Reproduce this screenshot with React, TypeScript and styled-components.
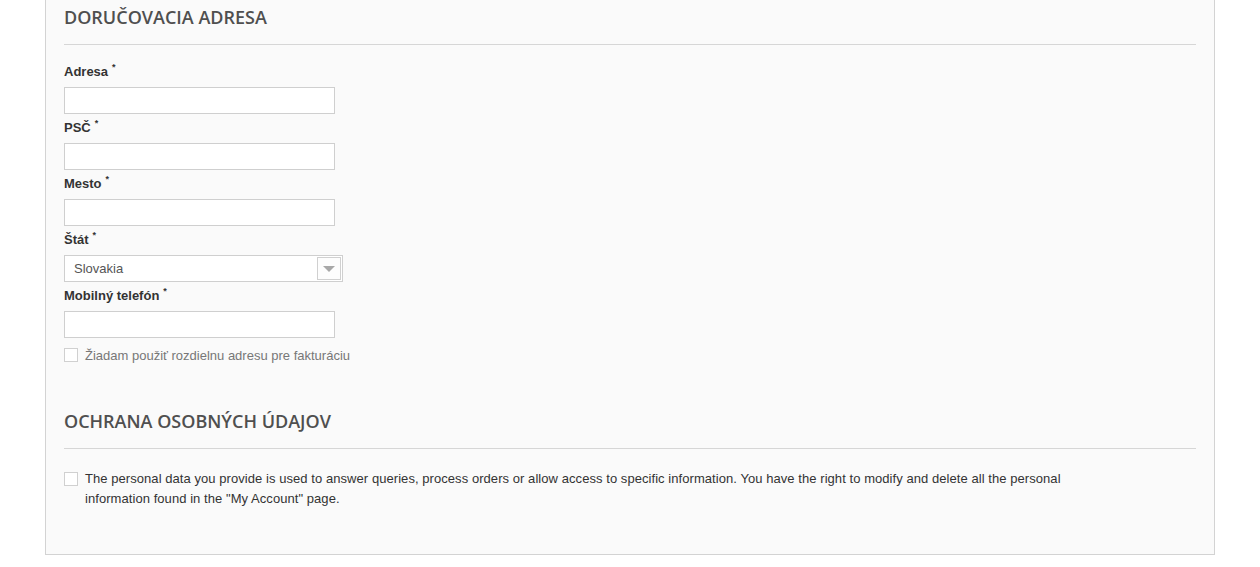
import React from "react";
import styled, { createGlobalStyle } from "styled-components";

const GlobalStyle = createGlobalStyle`
  html, body { margin: 0; padding: 0; background: #ffffff; }
  body { font-family: "Liberation Sans", Arial, Helvetica, sans-serif; }
  * { box-sizing: border-box; }
`;

const Panel = styled.div`
  margin-left: 45px;
  width: 1170px;
  background: #fafafa;
  border: 1px solid #d3d3d3;
  border-top: none;
  padding: 5px 18px 45px 18px;
`;

const Section = styled.section<{ $gapTop?: number }>`
  margin-top: ${(p) => p.$gapTop ?? 0}px;
`;

const Heading = styled.h2`
  margin: 0;
  font-family: "Open Sans", sans-serif;
  font-weight: 600;
  font-size: 18px;
  line-height: 24px;
  color: #4f4f4f;
  text-transform: uppercase;
`;

const Rule = styled.div`
  height: 1px;
  background: #d6d6d6;
  margin: 15px 0 0 0;
`;

const Fields = styled.div`
  padding-top: 18px;
  display: flex;
  flex-direction: column;
`;

const Field = styled.div`
  display: flex;
  flex-direction: column;
  align-items: flex-start;
  margin-bottom: 5px;
`;

const Label = styled.label`
  font-size: 13px;
  line-height: 17px;
  font-weight: 700;
  color: #333333;
  margin-bottom: 7px;
`;

const Req = styled.span`
  font-size: 9px;
  vertical-align: top;
  line-height: 9px;
  margin-left: 4px;
`;

const TextInput = styled.input`
  width: 271px;
  height: 27px;
  border: 1px solid #cfcfcf;
  background: #ffffff;
  padding: 0 9px;
  font-family: "Liberation Sans", Arial, sans-serif;
  font-size: 13px;
  outline: none;
  margin: 0;
`;

const SelectBox = styled.div`
  width: 279px;
  height: 27px;
  border: 1px solid #cfcfcf;
  background: #ffffff;
  display: flex;
  align-items: center;
  justify-content: space-between;
  padding: 1px 1px 1px 9px;
`;

const SelectText = styled.span`
  font-size: 13px;
  color: #555555;
`;

const ArrowBox = styled.div`
  width: 24px;
  height: 23px;
  border: 1px solid #d0d0d0;
  background: #fdfdfd;
  display: flex;
  align-items: center;
  justify-content: center;
`;

const Triangle = styled.div`
  width: 0;
  height: 0;
  border-left: 6px solid transparent;
  border-right: 6px solid transparent;
  border-top: 6px solid #a8a8a8;
  margin-top: 1px;
`;

const CheckRow = styled.label<{ $top?: number; $color?: string; $lh?: number }>`
  display: flex;
  align-items: flex-start;
  gap: 7px;
  margin-top: ${(p) => p.$top ?? 0}px;
  font-size: 13px;
  line-height: ${(p) => p.$lh ?? 16}px;
  color: ${(p) => p.$color ?? "#333"};
`;

const Box = styled.span<{ $offset?: number }>`
  flex: none;
  width: 14px;
  height: 14px;
  border: 1px solid #d0d0d0;
  background: #ffffff;
  margin-top: ${(p) => p.$offset ?? 1}px;
`;

const PrivacyText = styled.span`
  max-width: 1000px;
  letter-spacing: 0.06px;
`;

const fields = ["Adresa", "PSČ", "Mesto"];

export default function App() {
  return (
    <>
      <GlobalStyle />
      <Panel>
        <Section>
          <Heading>Doručovacia adresa</Heading>
          <Rule />
          <Fields>
            {fields.map((f) => (
              <Field key={f}>
                <Label>
                  {f}
                  <Req>*</Req>
                </Label>
                <TextInput type="text" />
              </Field>
            ))}
            <Field>
              <Label>
                Štát<Req>*</Req>
              </Label>
              <SelectBox>
                <SelectText>Slovakia</SelectText>
                <ArrowBox>
                  <Triangle />
                </ArrowBox>
              </SelectBox>
            </Field>
            <Field>
              <Label>
                Mobilný telefón<Req>*</Req>
              </Label>
              <TextInput type="text" />
            </Field>
            <CheckRow $top={5} $color="#777777">
              <Box $offset={0} />
              <span>Žiadam použiť rozdielnu adresu pre fakturáciu</span>
            </CheckRow>
          </Fields>
        </Section>
        <Section $gapTop={45}>
          <Heading>Ochrana osobných údajov</Heading>
          <Rule />
          <CheckRow $top={20} $lh={20} $color="#333333">
            <Box $offset={3} />
            <PrivacyText>
              The personal data you provide is used to answer queries, process orders or allow access to
              specific information. You have the right to modify and delete all the personal information
              found in the "My Account" page.
            </PrivacyText>
          </CheckRow>
        </Section>
      </Panel>
    </>
  );
}
